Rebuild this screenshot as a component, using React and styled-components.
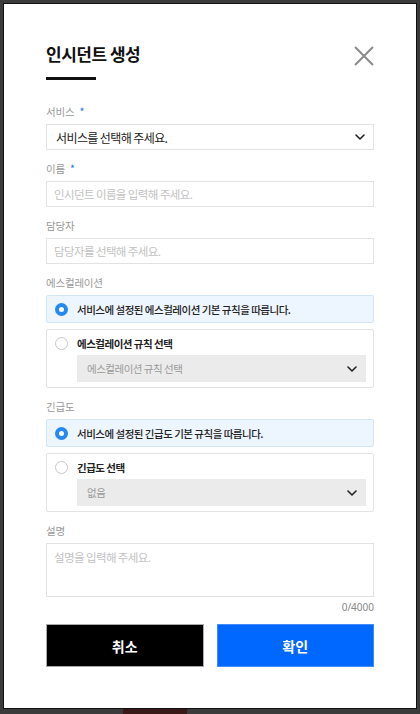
import styled, { createGlobalStyle } from "styled-components";

const GlobalStyle = createGlobalStyle`
  html, body {
    margin: 0;
    padding: 0;
    background: #3b3b3b;
  }
  body {
    font-family: "Noto Sans CJK KR", "Noto Sans", sans-serif;
    color: #222;
  }
  * { box-sizing: border-box; }
`;

const Chevron = ({ color = "#222" }) => (
  <svg width="10" height="6" viewBox="0 0 10 6" fill="none">
    <path d="M1 1l4 4 4-4" stroke={color} strokeWidth="1.6" strokeLinecap="round" strokeLinejoin="round" />
  </svg>
);

const Field = ({ label, required, children }) => (
  <FieldBox>
    <Label>
      {label}
      {required && <Star>*</Star>}
    </Label>
    {children}
  </FieldBox>
);

const RuleGroup = ({ label, defaultText, customText, customValue }) => (
  <FieldBox>
    <Label>{label}</Label>
    <Options>
      <Option $active>
        <OptionRow>
          <Radio $checked />
          <OptionText>{defaultText}</OptionText>
        </OptionRow>
      </Option>
      <Option>
        <OptionRow>
          <Radio />
          <OptionText $strong>{customText}</OptionText>
        </OptionRow>
        <InnerSelect>
          <span>{customValue}</span>
          <Chevron />
        </InnerSelect>
      </Option>
    </Options>
  </FieldBox>
);

const App = () => {
  return (
    <>
      <GlobalStyle />
      <Backdrop>
        <Modal>
          <Header>
            <TitleBlock>
              <Title>인시던트 생성</Title>
              <TitleBar />
            </TitleBlock>
            <CloseButton aria-label="닫기">
              <svg width="20" height="20" viewBox="0 0 20 20">
                <path d="M1 1l18 18M19 1L1 19" stroke="#8a8a8a" strokeWidth="2" />
              </svg>
            </CloseButton>
          </Header>

          <Form>
            <Field label="서비스" required>
              <SelectBox>
                <span>서비스를 선택해 주세요.</span>
                <Chevron />
              </SelectBox>
            </Field>
            <Field label="이름" required>
              <Input placeholder="인시던트 이름을 입력해 주세요." />
            </Field>
            <Field label="담당자">
              <Input placeholder="담당자를 선택해 주세요." />
            </Field>
            <RuleGroup
              label="에스컬레이션"
              defaultText="서비스에 설정된 에스컬레이션 기본 규칙을 따릅니다."
              customText="에스컬레이션 규칙 선택"
              customValue="에스컬레이션 규칙 선택"
            />
            <RuleGroup
              label="긴급도"
              defaultText="서비스에 설정된 긴급도 기본 규칙을 따릅니다."
              customText="긴급도 선택"
              customValue="없음"
            />
            <FieldBox>
              <Label>설명</Label>
              <TextArea placeholder="설명을 입력해 주세요." />
              <Counter>0/4000</Counter>
            </FieldBox>
          </Form>

          <Buttons>
            <Button $variant="dark">취소</Button>
            <Button $variant="primary">확인</Button>
          </Buttons>
        </Modal>
        <BottomStrip>
          <Patch />
        </BottomStrip>
      </Backdrop>
    </>
  );
};

const Backdrop = styled.div`
  width: 420px;
  height: 714px;
  padding-top: 3px;
  display: flex;
  flex-direction: column;
  overflow: hidden;
`;

const Modal = styled.div`
  margin-left: 3px;
  width: 414px;
  height: 706px;
  background: #ffffff;
  border: 1px solid #111;
  padding: 38px 42px 0 42px;
  display: flex;
  flex-direction: column;
`;

const BottomStrip = styled.div`
  flex: 1;
  display: flex;
  padding-left: 123px;
`;

const Patch = styled.div`
  width: 64px;
  background: #3a1818;
`;

const Header = styled.div`
  display: flex;
  justify-content: space-between;
  align-items: flex-start;
`;

const TitleBlock = styled.div`
  display: flex;
  flex-direction: column;
`;

const Title = styled.h1`
  margin: 0;
  font-size: 17px;
  line-height: 24px;
  font-weight: 700;
  color: #111;
  letter-spacing: -0.5px;
`;

const TitleBar = styled.div`
  margin-top: 11px;
  width: 50px;
  height: 3px;
  background: #111;
`;

const CloseButton = styled.button`
  margin-top: 4px;
  padding: 0;
  border: 0;
  background: none;
  width: 20px;
  height: 20px;
  display: flex;
  cursor: pointer;
`;

const Form = styled.div`
  margin-top: 24px;
  display: flex;
  flex-direction: column;
  gap: 11px;
`;

const FieldBox = styled.div`
  display: flex;
  flex-direction: column;
`;

const Label = styled.div`
  font-size: 10.5px;
  line-height: 16px;
  color: #999;
  letter-spacing: -0.2px;
  margin-bottom: 4px;
`;

const Star = styled.span`
  color: #1a73e8;
  margin-left: 5px;
`;

const SelectBox = styled.div`
  height: 26px;
  border: 1px solid #e3e3e3;
  padding: 0 8px 0 9px;
  display: flex;
  align-items: center;
  justify-content: space-between;
  font-size: 12px;
  letter-spacing: -0.6px;
  color: #222;
`;

const Input = styled.input`
  height: 26px;
  border: 1px solid #e3e3e3;
  padding: 0 7px;
  font-family: inherit;
  font-size: 11.5px;
  letter-spacing: -0.6px;
  outline: none;
  &::placeholder { color: #c2c2c2; }
`;

const Options = styled.div`
  display: flex;
  flex-direction: column;
  gap: 6px;
`;

const Option = styled.div`
  border: 1px solid ${(p) => (p.$active ? "#d3e5fb" : "#e3e3e3")};
  background: ${(p) => (p.$active ? "#edf5ff" : "#fff")};
  border-radius: 2px;
  min-height: 28px;
  padding: ${(p) => (p.$active ? "0 8px" : "5px 7px 5px 8px")};
  display: flex;
  flex-direction: column;
  justify-content: center;
`;

const OptionRow = styled.div`
  display: flex;
  align-items: center;
  gap: 9px;
  height: 16px;
`;

const Radio = styled.span`
  width: 13px;
  height: 13px;
  border-radius: 50%;
  flex-shrink: 0;
  background: ${(p) => (p.$checked ? "#2489f2" : "#fff")};
  border: ${(p) => (p.$checked ? "none" : "1px solid #c8c8c8")};
  display: flex;
  align-items: center;
  justify-content: center;
  &::after {
    content: "";
    display: ${(p) => (p.$checked ? "block" : "none")};
    width: 5px;
    height: 5px;
    border-radius: 50%;
    background: #fff;
  }
`;

const OptionText = styled.span`
  font-size: 10.5px;
  letter-spacing: -0.5px;
  font-weight: ${(p) => (p.$strong ? 600 : 500)};
  color: #222;
`;

const InnerSelect = styled.div`
  margin: 4px 0 0 22px;
  height: 27px;
  background: #ebebeb;
  padding: 0 9px 0 10px;
  display: flex;
  align-items: center;
  justify-content: space-between;
  font-size: 10.5px;
  letter-spacing: -0.5px;
  color: #9a9a9a;
`;

const TextArea = styled.textarea`
  height: 54px;
  border: 1px solid #e3e3e3;
  padding: 5px 7px;
  font-family: inherit;
  font-size: 11.5px;
  letter-spacing: -0.6px;
  resize: none;
  outline: none;
  &::placeholder { color: #c2c2c2; }
`;

const Counter = styled.div`
  align-self: flex-end;
  margin-top: 3px;
  font-size: 10px;
  line-height: 14px;
  color: #888;
  font-family: "Noto Sans", sans-serif;
`;

const Buttons = styled.div`
  margin-top: 10px;
  display: grid;
  grid-template-columns: 1fr 1fr;
  gap: 13px;
`;

const Button = styled.button`
  height: 43px;
  border: 1px solid ${(p) => (p.$variant === "primary" ? "#3f8cff" : "#aaa")};
  background: ${(p) => (p.$variant === "primary" ? "#0067ff" : "#000")};
  color: #fff;
  font-family: inherit;
  font-size: 14px;
  font-weight: 700;
  cursor: pointer;
`;

export default App;
